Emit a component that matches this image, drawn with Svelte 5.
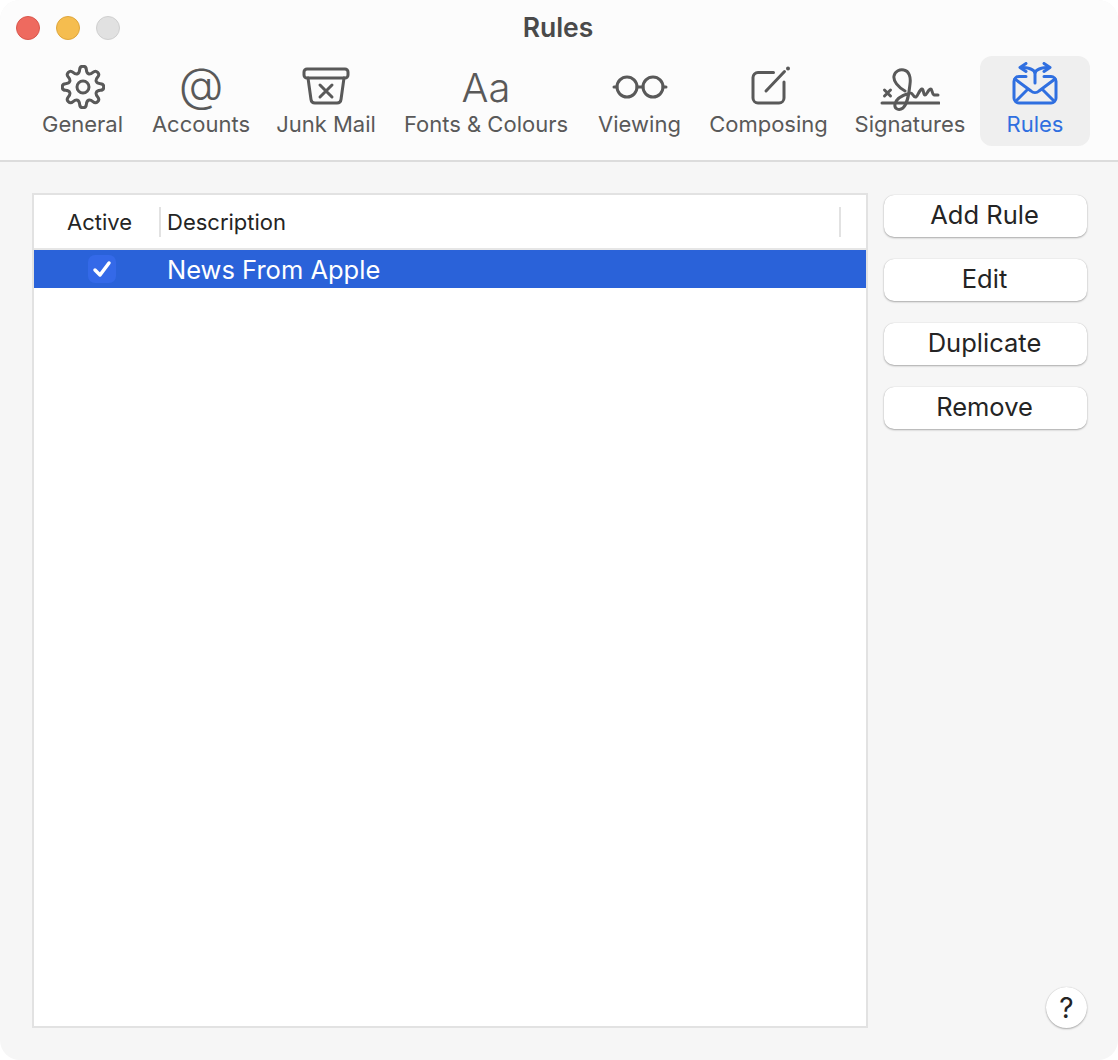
<script>
  // toolbar tabs, icon is picked by key in the markup
  const tabs = [
    { key: 'general', label: 'General', width: 109 },
    { key: 'accounts', label: 'Accounts', width: 128 },
    { key: 'junk', label: 'Junk Mail', width: 122 },
    { key: 'fonts', label: 'Fonts & Colours', width: 198 },
    { key: 'viewing', label: 'Viewing', width: 109 },
    { key: 'composing', label: 'Composing', width: 149 },
    { key: 'signatures', label: 'Signatures', width: 134 },
    { key: 'rules', label: 'Rules', width: 110 }
  ];
  const actions = ['Add Rule', 'Edit', 'Duplicate', 'Remove'];

  let active = $state('rules');
  let checked = $state(true);

  // rounded cog: corners of each tooth get smoothed with quadratic curves
  function gearPath(cx, cy, teeth, outer, inner) {
    const step = (Math.PI * 2) / teeth;
    const pts = [];
    for (let i = 0; i < teeth; i++) {
      const a = i * step - Math.PI / 2;
      for (const [t, r] of [[-0.32, inner], [-0.19, outer], [0.19, outer], [0.32, inner]]) {
        pts.push([cx + Math.cos(a + t * step) * r, cy + Math.sin(a + t * step) * r]);
      }
    }
    const mid = (p, q) => [(p[0] + q[0]) / 2, (p[1] + q[1]) / 2];
    const fmt = (p) => p[0].toFixed(2) + ' ' + p[1].toFixed(2);
    let d = 'M' + fmt(mid(pts[pts.length - 1], pts[0]));
    pts.forEach((p, i) => {
      d += 'Q' + fmt(p) + ' ' + fmt(mid(p, pts[(i + 1) % pts.length]));
    });
    return d + 'Z';
  }
  const gear = gearPath(22, 22, 8, 21, 14.5);
</script>

<div class="window">
  <header class="toolbar">
    <div class="titlebar">
      <div class="lights">
        <span class="light red"></span>
        <span class="light yellow"></span>
        <span class="light grey"></span>
      </div>
      <h1>Rules</h1>
    </div>
    <nav class="tabs">
      {#each tabs as tab}
        <button class="tab" class:selected={active === tab.key} style="width: {tab.width}px" onclick={() => (active = tab.key)}>
          <span class="icon">
            {#if tab.key === 'general'}
              <svg width="44" height="44" viewBox="0 0 44 44" fill="none" stroke="currentColor" stroke-width="3" stroke-linejoin="round">
                <path d={gear} />
                <circle cx="22" cy="22" r="6" />
              </svg>
            {:else if tab.key === 'accounts'}
              <span class="at">@</span>
            {:else if tab.key === 'junk'}
              <svg width="48" height="40" viewBox="0 0 48 40" fill="none" stroke="currentColor" stroke-width="3" stroke-linecap="round" stroke-linejoin="round">
                <rect x="2" y="2" width="44" height="9" rx="3" />
                <path d="M6 11l3 21.500a4 4 0 0 0 4 3.500h22a4 4 0 0 0 4-3.500l3-21.500" />
                <path d="M18 18l12 12M30 18l-12 12" />
              </svg>
            {:else if tab.key === 'fonts'}
              <span class="aa">Aa</span>
            {:else if tab.key === 'viewing'}
              <svg width="56" height="26" viewBox="0 0 56 26" fill="none" stroke="currentColor" stroke-width="3" stroke-linecap="round">
                <circle cx="15" cy="13" r="10" />
                <circle cx="41" cy="13" r="10" />
                <path d="M25 13h6M2 13h3M51 13h3" />
              </svg>
            {:else if tab.key === 'composing'}
              <svg width="44" height="42" viewBox="0 0 44 42" fill="none" stroke="currentColor" stroke-width="3" stroke-linecap="round" stroke-linejoin="round">
                <path d="M26.500 6.500H11a5 5 0 0 0-5 5V32a5 5 0 0 0 5 5h21a5 5 0 0 0 5-5V16" />
                <path d="M19 25L37.500 5.500" />
                <circle cx="41" cy="2.500" r="1" fill="currentColor" stroke-width="2" />
              </svg>
            {:else if tab.key === 'signatures'}
              <svg width="60" height="50" viewBox="0 0 60 50" fill="none" stroke="currentColor" stroke-width="3" stroke-linecap="round" stroke-linejoin="round">
                <path d="M2 41h57" />
                <path d="M4.500 28l6 6M10.500 28l-6 6" />
                <path d="M25 29C18 25 13 19 14 14C15 9 20 7 24 8C29 9 31 15 30 22C29 31 28 41 23 46C19 49 14 47 15 42C16 37 23 33 30 31C33 30 33 36 36 35C38 34 39 28 42 27C44 27 43 33 45 33C47 33 48 27 51 27C52 27 52 32 54 33L58 33" />
              </svg>
            {:else}
              <svg width="46" height="50" viewBox="0 0 46 50" fill="none" stroke="currentColor" stroke-width="3" stroke-linecap="round" stroke-linejoin="round">
                <path d="M14 14.500H7a5 5 0 0 0-5 5V36a5 5 0 0 0 5 5h32a5 5 0 0 0 5-5V19.500a5 5 0 0 0-5-5h-7" />
                <path d="M3 17L19 29a6 6 0 0 0 8 0L43 17M4 39L16 27M42 39L30 27" />
                <path d="M23 21V12C23 8 18 6 11 5.500M23 12C23 8 28 6 35 5.500" />
                <path d="M14 1.500L8 5.500L14 9.500M32 1.500L38 5.500L32 9.500" />
              </svg>
            {/if}
          </span>
          <span class="label">{tab.label}</span>
        </button>
      {/each}
    </nav>
  </header>

  <main class="content">
    <section class="list">
      <div class="list-head">
        <div class="col-active">Active</div>
        <div class="col-desc">Description</div>
      </div>
      <div class="row selected">
        <div class="col-active cell">
          <button class="check" aria-label="Active" onclick={() => (checked = !checked)}>
            {#if checked}
              <svg width="20" height="18" viewBox="0 0 20 18" fill="none" stroke="#fff" stroke-width="3.500" stroke-linecap="round" stroke-linejoin="round">
                <path d="M3 10l5 5L17 3" />
              </svg>
            {/if}
          </button>
        </div>
        <div class="col-desc cell name">News From Apple</div>
      </div>
    </section>

    <aside class="side">
      <div class="actions">
        {#each actions as action}
          <button class="action">{action}</button>
        {/each}
      </div>
      <button class="help">?</button>
    </aside>
  </main>
</div>

<style>
  :global(body) {
    background: #fff;
  }

  .window {
    width: 1118px;
    height: 1060px;
    display: flex;
    flex-direction: column;
    background: #f6f6f6;
    border-radius: 20px;
    overflow: hidden;
    font-family: Inter, "Liberation Sans", sans-serif;
    color: #242424;
  }

  button {
    font-family: inherit;
    cursor: pointer;
  }

  .toolbar {
    height: 162px;
    box-sizing: border-box;
    background: #fcfcfc;
    border-bottom: 2px solid #dcdcdc;
  }

  .titlebar {
    position: relative;
    height: 56px;
    display: flex;
    justify-content: center;
    align-items: center;
  }

  h1 {
    margin: -2px 2px 0 0;
    font-size: 26.500px;
    font-weight: 600;
    color: #4a4a4a;
  }

  .lights {
    position: absolute;
    left: 16px;
    top: 16px;
    display: flex;
    gap: 16px;
  }

  .light {
    width: 24px;
    height: 24px;
    box-sizing: border-box;
    border-radius: 50%;
    border: 1px solid;
  }
  .red { background: #ee6a5f; border-color: #d9574d; }
  .yellow { background: #f5bd4f; border-color: #dea63c; }
  .grey { background: #e1e1e1; border-color: #cfcfcf; }

  .tabs {
    display: flex;
    padding-left: 28px;
  }

  .tab {
    flex: none;
    height: 90px;
    padding: 4px 0 0;
    display: flex;
    flex-direction: column;
    align-items: center;
    border: 0;
    border-radius: 12px;
    background: none;
    color: #595959;
    white-space: nowrap;
  }

  .tab.selected {
    margin-left: 3px;
    background: #efefef;
    color: #2f6fe0;
  }

  .icon {
    height: 54px;
    display: flex;
    align-items: center;
    justify-content: center;
  }

  .label {
    font-size: 22px;
    line-height: 20px;
  }

  .at {
    margin-top: -6px;
    font-size: 46px;
    font-weight: 350;
    line-height: 1;
  }

  .aa {
    margin-top: 2px;
    font-size: 40px;
    font-weight: 350;
    line-height: 1;
  }

  .content {
    flex: 1;
    display: flex;
    gap: 16px;
    padding: 31px 31px 32px 32px;
  }

  .list {
    flex: none;
    width: 836px;
    box-sizing: border-box;
    background: #fff;
    border: 2px solid #e2e2e2;
  }

  .list-head {
    height: 55px;
    box-sizing: border-box;
    display: flex;
    align-items: center;
    border-bottom: 2px solid #e6e6e6;
    font-size: 22px;
  }

  .col-active {
    width: 127px;
    height: 30px;
    line-height: 30px;
    box-sizing: border-box;
    text-align: center;
    margin-right: 6px;
    padding-left: 6px;
    border-right: 2px solid #e2e2e2;
  }

  .col-desc {
    width: 672px;
    height: 30px;
    line-height: 30px;
    border-right: 2px solid #e2e2e2;
  }

  .row {
    height: 38px;
    display: flex;
    align-items: center;
  }

  .row.selected {
    background: #2a62d9;
    color: #fff;
  }

  .cell {
    border: 0;
    display: flex;
    align-items: center;
  }

  .cell.col-active {
    justify-content: center;
    padding-left: 9px;
  }

  .name {
    font-size: 25.500px;
    padding-top: 1px;
  }

  .check {
    width: 28px;
    height: 28px;
    padding: 0;
    border: 0;
    border-radius: 7px;
    background: #3469e8;
    display: flex;
    align-items: center;
    justify-content: center;
  }

  .side {
    flex: 1;
    display: flex;
    flex-direction: column;
    justify-content: space-between;
    align-items: flex-end;
    padding-top: 2px;
  }

  .actions {
    display: flex;
    flex-direction: column;
    gap: 22px;
    width: 203px;
  }

  .action {
    height: 42px;
    padding: 0 2px 4px 0;
    border: 0;
    border-radius: 10px;
    background: #fff;
    color: #242424;
    font-size: 25.500px;
    box-shadow: 0 1px 2px rgba(0, 0, 0, 0.3), 0 0 1px rgba(0, 0, 0, 0.2);
  }

  .help {
    width: 41px;
    height: 41px;
    padding: 0;
    border: 0;
    border-radius: 50%;
    background: #fff;
    color: #242424;
    font-size: 28px;
    font-weight: 400;
    box-shadow: 0 1px 2px rgba(0, 0, 0, 0.3), 0 0 1px rgba(0, 0, 0, 0.2);
  }
</style>
